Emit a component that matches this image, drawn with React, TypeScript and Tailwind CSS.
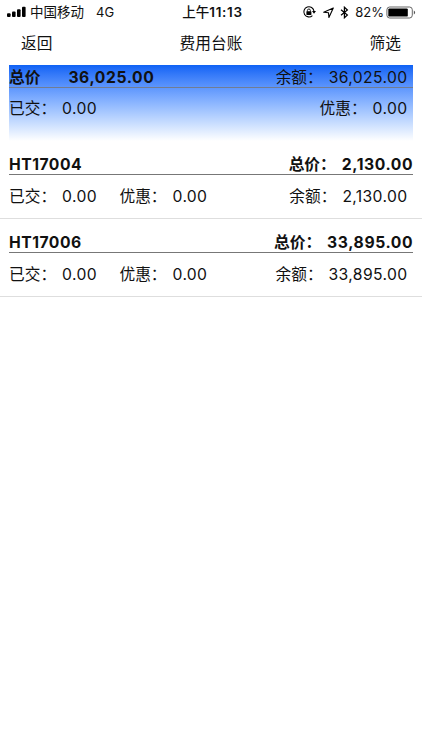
import { clsx } from "clsx"

interface Contract {
  code: string
  total: string
  paid: string
  discount: string
  balance: string
}

const contracts: Contract[] = [
  { code: "HT17004", total: "2,130.00", paid: "0.00", discount: "0.00", balance: "2,130.00" },
  { code: "HT17006", total: "33,895.00", paid: "0.00", discount: "0.00", balance: "33,895.00" },
]

interface FieldProps {
  label: string
  value: string
  bold?: boolean
  className?: string
}

function Field({ label, value, bold, className }: FieldProps) {
  return (
    <div className={clsx("flex items-center whitespace-nowrap", className)}>
      <span>{label}：</span>
      <span className={clsx("ml-1.5", bold ? "-mr-[0.2px] tracking-[0.6px]" : "-mr-[0.4px] tracking-[0.35px]")}>
        {value}
      </span>
    </div>
  )
}

function StatusBar() {
  return (
    <div className="grid h-6 grid-cols-[1fr_auto_1fr] items-center pl-[7px] pr-[6px] text-[13.5px] leading-6">
      <div className="flex items-center">
        {/* Signal */}
        <svg width="19" height="12" viewBox="0 0 19 12" className="mr-[4px]">
          <rect x="0" y="7.2" width="3.6" height="3.8" rx="1" />
          <rect x="5" y="5.4" width="3.6" height="5.6" rx="1" />
          <rect x="10" y="3.2" width="3.6" height="7.8" rx="1" />
          <rect x="15" y="0.8" width="3.6" height="10.2" rx="1" />
        </svg>
        <span>中国移动</span>
        <span className="ml-3 text-[13px]">4G</span>
      </div>
      <div className="pl-[2px] font-semibold tracking-[0.7px]">
        <span className="font-medium tracking-normal">上午</span>11:13
      </div>
      <div className="flex items-center justify-end">
        {/* Rotation lock */}
        <svg width="14" height="14" viewBox="0 0 14 14" fill="none" stroke="#000">
          <path d="M10.4 10.6A5.1 5.1 0 1 1 12 6.2" strokeWidth="1.1" />
          <path d="M10 6.1h4l-2 2.7z" fill="#000" stroke="none" />
          <rect x="4.4" y="6.3" width="5" height="3.7" rx="0.4" fill="#000" stroke="none" />
          <path d="M5.4 6.6V5.5a1.5 1.5 0 0 1 3 0v1.1" strokeWidth="0.9" />
        </svg>
        {/* Location */}
        <svg width="13" height="13" viewBox="0 0 13 13" fill="none" stroke="#000" className="ml-[6px]">
          <path d="M11.3 2 1.7 6.2l4.8.5.4 4.8z" strokeWidth="1.1" strokeLinejoin="round" />
        </svg>
        {/* Bluetooth */}
        <svg width="9" height="13" viewBox="0 0 9 13" fill="none" stroke="#000" className="ml-[5px]">
          <path d="M1 3.7 7.4 9 4.4 11.8V1.2l3 2.8L1 9.3" strokeWidth="1.2" />
        </svg>
        <span className="ml-[6px] text-[13px]">82%</span>
        {/* Battery */}
        <svg width="30" height="13" viewBox="0 0 30 13" className="ml-[2px]">
          <rect x="0.9" y="1" width="25.4" height="11" rx="2.8" fill="none" stroke="#555" strokeWidth="0.9" />
          <rect x="2.3" y="2.4" width="19.5" height="8.2" rx="1.2" />
          <path d="M27.8 4.5q1.3.6 1.3 2t-1.3 2z" fill="#555" />
        </svg>
      </div>
    </div>
  )
}

function ContractRow({ contract }: { contract: Contract }) {
  return (
    <section className="h-[78px] border-b border-[#dedede] px-[9px] pt-[13px]">
      <div className="flex h-[21px] items-center justify-between border-b border-[#777] pt-[2px] font-bold">
        <span className="tracking-[0.5px]">{contract.code}</span>
        <Field label="总价" value={contract.total} bold />
      </div>
      <div className="flex h-[43px] items-center pt-px">
        <Field label="已交" value={contract.paid} />
        <Field label="优惠" value={contract.discount} className="ml-[23px]" />
        <Field label="余额" value={contract.balance} className="ml-auto mr-[6px]" />
      </div>
    </section>
  )
}

export default function App() {
  return (
    <div className="min-h-screen w-full bg-white font-['Inter','Noto_Sans_CJK_SC',sans-serif] text-[15.7px] leading-[22px] text-[#111]">
      <StatusBar />

      <header className="grid h-[41px] grid-cols-3 items-center px-[21px] pb-[2px]">
        <span>返回</span>
        <span className="text-center">费用台账</span>
        <span className="text-right">筛选</span>
      </header>

      {/* Summary */}
      <section className="mx-[9px] h-[76px] bg-linear-to-b from-[#0d62f5] to-white">
        <div className="flex h-[23px] items-center border-b border-[#777]/80 pt-[3px]">
          <span className="font-bold">总价</span>
          <span className="ml-[28px] font-bold tracking-[0.6px]">36,025.00</span>
          <Field label="余额" value="36,025.00" className="ml-auto mr-[6px]" />
        </div>
        <div className="flex h-[41px] items-center justify-between pr-[6px]">
          <Field label="已交" value="0.00" />
          <Field label="优惠" value="0.00" />
        </div>
      </section>

      {contracts.map((contract) => (
        <ContractRow key={contract.code} contract={contract} />
      ))}
    </div>
  )
}
